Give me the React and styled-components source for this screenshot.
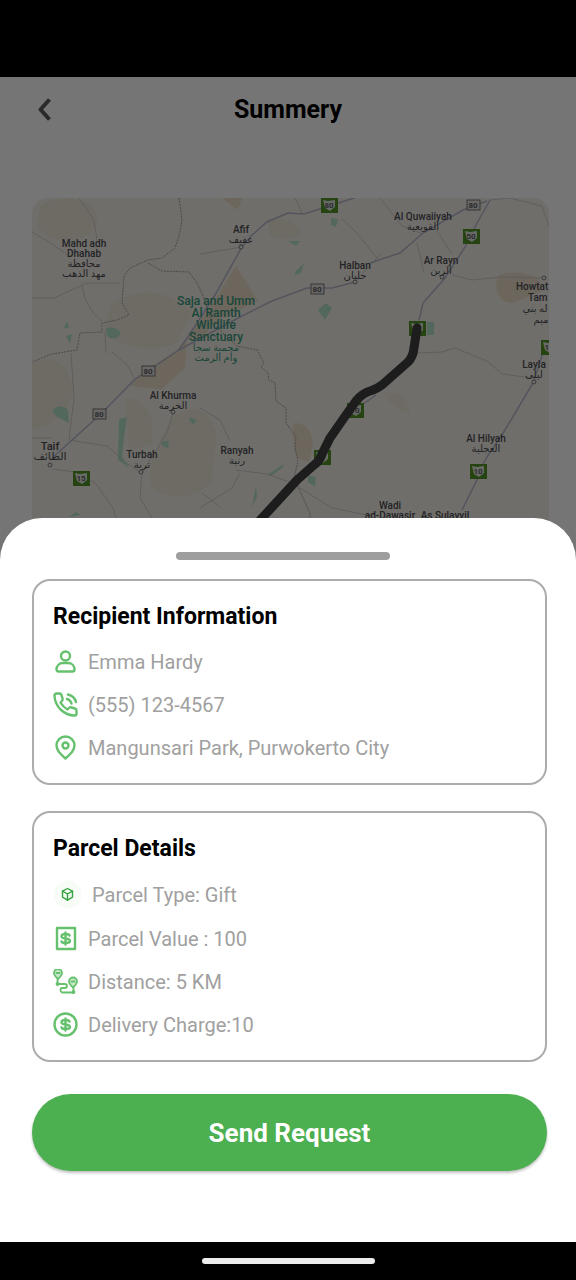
import React from "react";
import styled, { createGlobalStyle } from "styled-components";

const GlobalStyle = createGlobalStyle`
  * { box-sizing: border-box; }
  body { margin: 0; background: #000; font-family: Roboto, "Liberation Sans", sans-serif; }
  h1, h2, ul { margin: 0; padding: 0; }
  button { font-family: inherit; border: 0; cursor: pointer; }
`;

const Phone = styled.div`
  min-height: 100vh;
  display: flex;
  flex-direction: column;
  background: #000;
`;

const StatusBar = styled.div`
  height: 77px;
  flex: none;
`;

const Stage = styled.div`
  flex: 1;
  display: grid;
  background: #fff;
`;

const Screen = styled.main`
  grid-area: 1 / 1;
  min-width: 0;
`;

const Header = styled.header`
  display: grid;
  grid-template-columns: 48px 1fr 48px;
  align-items: center;
  height: 65px;
  padding: 0 20px;
`;

const BackButton = styled.button`
  display: flex;
  align-items: center;
  justify-content: center;
  width: 48px;
  height: 48px;
  padding: 0;
  background: none;
  color: #5c5c5c;
`;

const Title = styled.h1`
  text-align: center;
  font-size: 25px;
  line-height: 32px;
  font-weight: 700;
  color: #000;
`;

const MapFrame = styled.div`
  margin: 56px 27px 0 32px;
  height: 360px;
  border-radius: 16px;
  overflow: hidden;
  background: #f4f0e6;
`;

const MapDrawing = styled.svg`
  display: block;
  width: 100%;
  height: 100%;
`;

const Scrim = styled.div`
  grid-area: 1 / 1;
  background: rgba(0, 0, 0, 0.54);
`;

const Sheet = styled.section`
  grid-area: 1 / 1;
  align-self: end;
  display: flex;
  flex-direction: column;
  padding: 34px 29px 71px 32px;
  border-radius: 42px 42px 0 0;
  background: #fff;
  z-index: 1;
`;

const HandleRow = styled.div`
  display: flex;
  justify-content: center;
  padding-right: 13px;
  margin-bottom: 19px;
`;

const Handle = styled.div`
  width: 214px;
  height: 8px;
  border-radius: 4px;
  background: #9e9e9e;
`;

const Card = styled.section`
  padding: 22px 19px 14px;
  border: 2px solid #acacac;
  border-radius: 18px;

  & + & { margin-top: 26px; }
`;

const CardTitle = styled.h2`
  margin-bottom: 9px;
  font-size: 23px;
  line-height: 28px;
  font-weight: 700;
  color: #000;
`;

const Rows = styled.ul`
  list-style: none;
`;

const Row = styled.li`
  display: flex;
  align-items: center;
  gap: 10px;
  height: ${(p) => (p.$tall ? "45px" : "43px")};
  font-size: 20px;
  line-height: 24px;
  color: #a0a0a0;
`;

const Icon = styled.svg`
  flex: none;
  width: ${(p) => p.$size || 25}px;
  height: ${(p) => p.$size || 25}px;
  fill: none;
  stroke: #66c16e;
  stroke-width: 2.4;
  stroke-linecap: round;
  stroke-linejoin: round;
`;

const SendButton = styled.button`
  height: 77px;
  margin-top: 32px;
  border-radius: 39px;
  background: #4caf50;
  color: #fff;
  font-size: 26px;
  line-height: 32px;
  font-weight: 700;
  box-shadow: 0 2px 3px rgba(0, 0, 0, 0.25);
`;

const NavBar = styled.div`
  display: flex;
  align-items: center;
  justify-content: center;
  height: 38px;
  flex: none;
`;

const NavPill = styled.div`
  width: 173px;
  height: 6px;
  border-radius: 3px;
  background: #ececec;
`;

const PlaceLabel = styled.text`
  font-family: Roboto, "DejaVu Sans", sans-serif;
  font-size: ${(p) => p.$size || 10}px;
  font-weight: 500;
  text-anchor: ${(p) => p.$anchor || "middle"};
  fill: ${(p) => p.$fill || "#4c4c54"};
`;

const RoadNumber = styled.text`
  font-family: Roboto, sans-serif;
  font-size: 8px;
  font-weight: 700;
  text-anchor: middle;
  fill: #5c5c66;
`;

const places = [
  { x: 52, y: 49, lines: ["Mahd adh", "Dhahab", "محافظة", "مهد الذهب"] },
  { x: 209, y: 35, lines: ["Afif", "عفيف"] },
  { x: 391, y: 22, lines: ["Al Quwaiiyah", "القويعية"] },
  { x: 409, y: 66, lines: ["Ar Rayn", "الرين"] },
  { x: 323, y: 71, lines: ["Halban", "حلبان"] },
  { x: 502, y: 170, lines: ["Layla", "ليلى"] },
  { x: 141, y: 201, lines: ["Al Khurma", "الخرمة"] },
  { x: 18, y: 252, size: 11, lines: ["Taif", "الطائف"] },
  { x: 110, y: 260, lines: ["Turbah", "تربة"] },
  { x: 205, y: 256, lines: ["Ranyah", "رنية"] },
  { x: 454, y: 244, lines: ["Al Hilyah", "العجلية"] },
  { x: 358, y: 311, lines: ["Wadi", "ad-Dawasir"] },
  { x: 413, y: 321, lines: ["As Sulayyil"] },
  { x: 484, y: 92, anchor: "start", lines: ["Howtat"] },
  { x: 496, y: 103, anchor: "start", lines: ["Tam"] },
  { x: 503, y: 114, lines: ["له بني"] },
  { x: 509, y: 125, lines: ["ميم"] },
  {
    x: 184, y: 107, size: 12, step: 12, fill: "#3a9a80",
    lines: ["Saja and Umm", "Al Ramth", "Wildlife", "Sanctuary"],
  },
  { x: 184, y: 153, fill: "#3a9a80", lines: ["محمية سجا", "وأم الرمث"] },
];

const shields = [
  [297, 7, "80"], [439, 38, "50"], [385, 130, ""], [517, 149, "10"],
  [49, 280, "15"], [323, 212, "10"], [290, 259, ""], [446, 273, "10"],
];

const plates = [[285, 91, "80"], [441, 7, "80"], [116, 173, "80"], [67, 216, "80"]];

function RouteMap() {
  return (
    <MapDrawing viewBox="0 0 517 360" preserveAspectRatio="xMidYMin slice" role="img" aria-label="Route map">
      <rect width="517" height="360" fill="#f4f0e6" />
      <g fill="#efeadd">
        <path d="M8 8Q35-8 60 8Q75 28 50 40Q20 48 5 28Z" />
        <path d="M80 105Q125 80 160 115L145 145Q110 160 70 135Z" />
        <path d="M0 165Q30 150 42 190Q35 225 0 232Z" />
        <path d="M93 200Q125 200 120 245L97 255Z" />
        <path d="M140 220Q170 195 185 235L180 285Q150 310 120 290Q110 270 140 220Z" />
        <path d="M235 20Q265 20 270 35Q255 45 238 38Z" />
        <path d="M350 195Q375 190 378 215Q362 212 350 195Z" />
      </g>
      <g fill="#ebdfca">
        <path d="M190 0H210L206 12Z" />
        <path d="M204 68L226 103L180 125L172 140L155 142L153 170L130 191L98 188L105 178L145 152L183 102Z" />
        <path d="M262 225Q278 225 281 245L277 264L265 260Q258 240 262 225Z" />
        <path d="M465 78Q480 70 507 80L510 93L480 105Q468 105 464 90Z" />
      </g>
      <g fill="#b4e2ca">
        <path d="M74 130Q86 128 89 136Q82 144 75 138Z" />
        <path d="M35 123L37 130L32 130ZM34 138L40 136L38 146Z" />
        <path d="M20 213Q28 204 36 212L37 225L25 219Z" />
        <path d="M87 221L95 219L92 240L90 258L97 270L86 262Z" />
        <path d="M130 243L137 243L136 250L130 248Z" />
        <path d="M156 219L165 222L161 227Z" />
        <path d="M256 43L268 43L264 48Z" />
        <path d="M263 74L272 65L269 75L263 77Z" />
        <path d="M299 20L306 21L304 29L299 27Z" />
        <path d="M286 112L294 105L300 110L293 122Z" />
        <path d="M395 124H402V137H395Z" />
        <path d="M276 277L284 279L283 289L276 284Z" />
        <path d="M235 277L252 266L251 269L239 278Z" />
        <path d="M220 309L224 288L225 299Z" />
        <path d="M36 319L45 314L48 317Z" />
        <path d="M336 190L347 183L350 188Z" />
      </g>
      <g fill="none" stroke="#a8a5a8" strokeWidth="1" strokeDasharray="2 1">
        <path d="M147 0L150 22L147 38L143 50L130 60L116 62L98 70L92 78L90 105L97 117L85 122L70 125V134L48 135L45 152L20 156L0 164" />
        <path d="M116 65L130 73L157 74L165 85L172 100L180 125L205 148L225 152L232 165L229 169L236 175L237 182L243 185L244 203L254 210V225L264 239L263 250L266 263L262 280L278 315V340" />
      </g>
      <g fill="none" stroke="#d0cdcc" strokeWidth="1">
        <path d="M47 0L62 22L65 42M0 34Q20 45 37 58M0 100H22L55 85L88 85M50 88Q53 110 70 123M73 134L74 155" />
        <path d="M80 154L96 168L102 180M39 155L42 200L37 242L75 248L97 267L110 275" />
        <path d="M0 240L20 240M20 271L50 275L65 287L81 310L90 340M141 215L135 235L110 275L108 300L120 320" />
        <path d="M168 210L188 222L198 243M204 272L235 276L260 285L300 310L340 318M168 310L200 290L208 275M170 295L188 309" />
        <path d="M168 56L210 49M263 0L270 15M309 20L325 35L345 60M348 0L370 28L391 36M323 83L350 55M403 30L420 56" />
        <path d="M420 77L440 82L470 79L512 80M385 155L410 154L423 150L455 163L470 176L501 180M458 2L478 0L510 8L517 28M385 45L392 75" />
      </g>
      <g fill="none" stroke="#b6b7cd" strokeWidth="1.5">
        <path d="M18 262L29 252L69 216L102 182L147 152L165 125L183 97L210 49L219 38L235 24L256 15L272 16L297 8L322 0" />
        <path d="M147 152L208 119L240 103L275 90L300 90L323 84M338 65L368 55L391 35L431 12L455 3" />
        <path d="M458 2L445 25L433 49L413 80L391 105L387 122M344 197L323 212" />
        <path d="M512 152L501 185L470 237L453 262L446 280L430 312" />
      </g>
      {plates.map(([x, y, n]) => (
        <g key={`${x}-${y}`}>
          <rect x={x - 6} y={y - 5} width="13" height="10" fill="#e4e1da" stroke="#77757a" />
          <RoadNumber x={x} y={y + 3}>{n}</RoadNumber>
        </g>
      ))}
      {shields.map(([x, y, n]) => (
        <g key={`${x}-${y}`}>
          <rect x={x - 8} y={y - 7} width="17" height="15" fill="#529427" />
          <path d={`M${x - 6} ${y - 5}L${x - 1} ${y - 4}L${x + 6} ${y - 5}V${y + 2}L${x + 1} ${y + 6}L${x - 4} ${y + 3}Z`} fill="#e3e8dc" />
          <RoadNumber x={x} y={y + 3}>{n}</RoadNumber>
        </g>
      ))}
      <g fill="#f4f0e6" stroke="#7a7880">
        <circle cx="209" cy="49" r="2" />
        <circle cx="410" cy="79" r="2" />
        <circle cx="323" cy="84" r="2" />
        <circle cx="18" cy="267" r="2" />
        <circle cx="109" cy="274" r="2" />
        <circle cx="141" cy="214" r="2" />
        <circle cx="502" cy="184" r="2" />
        <circle cx="512" cy="80" r="2" />
      </g>
      {places.map((p) =>
        p.lines.map((line, i) => (
          <PlaceLabel key={line} x={p.x} y={p.y + i * (p.step || 10)} $size={p.size} $fill={p.fill} $anchor={p.anchor}>
            {line}
          </PlaceLabel>
        ))
      )}
      <path
        d="M385 130L382 150Q381 159 376 164L350 187Q346 190 341 192Q330 195 324 203L314 217L298 240L290 256Q288 263 282 267L265 282L231 319L210 342"
        fill="none" stroke="#3f3f3f" strokeWidth="9" strokeLinecap="round" strokeLinejoin="round"
      />
    </MapDrawing>
  );
}

const UserIcon = () => (
  <Icon viewBox="0 0 25 25" aria-hidden="true">
    <circle cx="12.500" cy="7" r="4.500" />
    <path d="M3.500 20.500C3.500 16.500 6.500 14 10 14H15C18.500 14 21.500 16.500 21.500 20.500Q21.500 22.500 19.500 22.500H5.500Q3.500 22.500 3.500 20.500Z" />
  </Icon>
);

const PhoneIcon = () => (
  <Icon viewBox="0 0 25 25" aria-hidden="true">
    <path d="M3.500 1.500H6.500Q8 1.500 8.500 3L9.500 6.500Q10 8 9 9L7.500 10.500Q10 15 14.500 17.500L16 16Q17 15 18.500 15.500L22 16.500Q23.500 17 23.500 18.500V21.500Q23.500 23.500 21.500 23.500Q14 23.500 7.500 17.500Q1.500 11 1.500 3.500Q1.500 1.500 3.500 1.500Z" />
    <path d="M15 2.500Q21.500 4 23 10M14 7Q17.500 8 18.500 11.500" />
  </Icon>
);

const PinIcon = () => (
  <Icon viewBox="0 0 25 25" aria-hidden="true">
    <path d="M12.500 23.500Q9.500 21 6 17Q3.500 13.500 3.500 10.500A9 9 0 0 1 21.500 10.500Q21.500 13.500 19 17Q15.500 21 12.500 23.500Z" />
    <circle cx="12.500" cy="10.500" r="3" />
  </Icon>
);

const ParcelIcon = () => (
  <Icon $size={29} viewBox="0 0 29 29" aria-hidden="true">
    <circle cx="14.500" cy="14.500" r="14" fill="#f7fcf7" stroke="none" />
    <g stroke="#37a443" strokeWidth="1.400">
      <path d="M14.500 8.500L19.500 11.200V17.200L14.500 20.200L9.500 17.200V11.200Z" />
      <path d="M9.500 11.200L14.500 14L19.500 11.200M14.500 14V20.200" />
    </g>
  </Icon>
);

const DollarMark = () => (
  <path d="M16.500 9.500Q16 8 12.500 8Q8.500 8 8.500 10.200Q8.500 12 12.500 12.500Q17 13 17 15Q17 17 12.500 17Q9 17 8.500 15.500M12.500 6.500V18.500" />
);

const ValueIcon = () => (
  <Icon viewBox="0 0 25 25" aria-hidden="true">
    <rect x="4" y="2" width="18" height="21" />
    <DollarMark />
  </Icon>
);

const ChargeIcon = () => (
  <Icon viewBox="0 0 25 25" aria-hidden="true">
    <circle cx="12.500" cy="12.500" r="11" />
    <DollarMark />
  </Icon>
);

const DistanceIcon = () => (
  <Icon viewBox="0 0 25 25" aria-hidden="true">
    <g strokeWidth="1.800">
      <path d="M5 10Q1 6.500 1 4A4 4 0 0 1 9 4Q9 6.500 5 10Z" fill="#c6e8c9" />
      <path d="M20 18.500Q16 15 16 12.500A4 4 0 0 1 24 12.500Q24 15 20 18.500Z" fill="#c6e8c9" />
      <path d="M3.500 4H6.500M18.500 12.500H21.500" />
      <path d="M4.500 10.500V15H11.500Q14 15 14 17T11.500 19H9Q7.500 19 7.500 21T9 23.500H20.500V19" />
      <circle cx="4.500" cy="15" r="1" />
      <circle cx="20.500" cy="23" r="1" />
    </g>
  </Icon>
);

export default function App() {
  return (
    <>
      <GlobalStyle />
      <Phone>
        <StatusBar />
        <Stage>
          <Screen>
            <Header>
              <BackButton type="button" aria-label="Back">
                <svg width="16" height="26" viewBox="0 0 16 26" fill="none" stroke="currentColor" strokeWidth="4" strokeLinejoin="round" aria-hidden="true">
                  <path d="M13.500 2.500L4.500 12.500L13.500 22.500" />
                </svg>
              </BackButton>
              <Title>Summery</Title>
            </Header>
            <MapFrame>
              <RouteMap />
            </MapFrame>
          </Screen>
          <Scrim />
          <Sheet>
            <HandleRow>
              <Handle />
            </HandleRow>
            <Card>
              <CardTitle>Recipient Information</CardTitle>
              <Rows>
                <Row><UserIcon />Emma Hardy</Row>
                <Row><PhoneIcon />(555) 123-4567</Row>
                <Row><PinIcon />Mangunsari Park, Purwokerto City</Row>
              </Rows>
            </Card>
            <Card>
              <CardTitle>Parcel Details</CardTitle>
              <Rows>
                <Row $tall><ParcelIcon />Parcel Type: Gift</Row>
                <Row><ValueIcon />Parcel Value : 100</Row>
                <Row><DistanceIcon />Distance: 5 KM</Row>
                <Row><ChargeIcon />Delivery Charge:10</Row>
              </Rows>
            </Card>
            <SendButton type="button">Send Request</SendButton>
          </Sheet>
        </Stage>
        <NavBar>
          <NavPill />
        </NavBar>
      </Phone>
    </>
  );
}
